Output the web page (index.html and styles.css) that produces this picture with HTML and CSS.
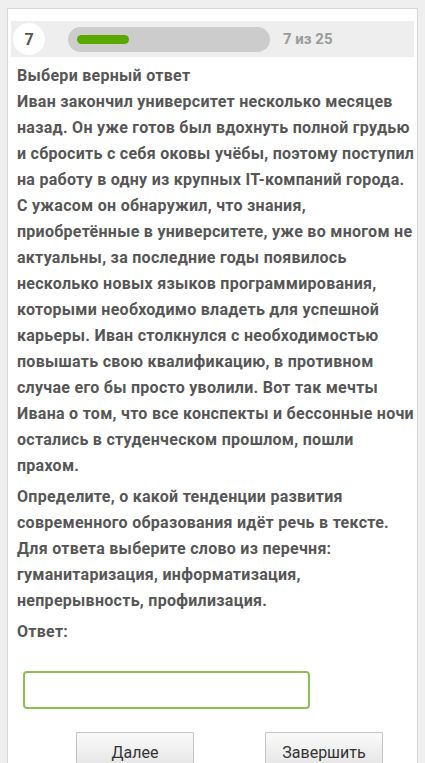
FILE: index.html
```html
<!DOCTYPE html>
<html lang="ru">
<head>
<meta charset="utf-8">
<title>Тест</title>
<link rel="stylesheet" href="styles.css">
</head>
<body>
<div class="card">
  <div class="progress-row">
    <div class="num">7</div>
    <div class="bar"><div class="fill"></div></div>
    <div class="count">7 из 25</div>
  </div>
  <div class="content">
    <p class="para">Выбери верный ответ<br>Иван закончил университет несколько месяцев назад. Он уже готов был вдохнуть полной грудью и сбросить с себя оковы учёбы, поэтому поступил на работу в одну из крупных IT-&#8288;компаний города. С ужасом он обнаружил, что знания, приобретённые в университете, уже во многом не актуальны, за последние годы появилось несколько новых языков программирования, которыми необходимо владеть для успешной карьеры. Иван столкнулся с необходимостью повышать свою квалификацию, в противном случае его бы просто уволили. Вот так мечты Ивана о том, что все конспекты и бессонные ночи остались в студенческом прошлом, пошли прахом.</p>
    <p class="para">Определите, о какой тенденции развития современного образования идёт речь в тексте. Для ответа выберите слово из перечня: гуманитаризация, информатизация, непрерывность, профилизация.</p>
    <p class="para">Ответ:</p>
    <input class="answer" type="text">
    <div class="buttons">
      <button class="btn">Далее</button>
      <button class="btn">Завершить</button>
    </div>
  </div>
</div>
</body>
</html>
```
FILE: styles.css
```css
html, body {
  margin: 0;
  padding: 0;
}
body {
  background: #efefef;
  font-family: Roboto, "Liberation Sans", sans-serif;
  padding: 8px 7px 0 7px;
  height: 763px;
  box-sizing: border-box;
  overflow: hidden;
}
.card {
  background: #fff;
  border: 1px solid #d6d6d6;
  border-bottom: none;
  width: 411px;
  box-sizing: border-box;
  padding: 12px 3px 0 3px;
  height: 800px;
}
.progress-row {
  background: #eeeeee;
  height: 36px;
  display: flex;
  align-items: center;
  padding: 0 2px;
}
.num {
  width: 32px;
  height: 32px;
  border-radius: 50%;
  background: #fff;
  display: flex;
  align-items: center;
  justify-content: center;
  font-weight: 700;
  font-size: 16px;
  color: #555;
}
.bar {
  margin-left: 23px;
  width: 202px;
  height: 25px;
  border-radius: 13px;
  background: #cccccc;
  display: flex;
  align-items: center;
  padding-left: 9px;
  box-sizing: border-box;
}
.fill {
  width: 52px;
  height: 9px;
  border-radius: 5px;
  background: #58a800;
}
.count {
  margin-left: 13px;
  font-size: 15px;
  font-weight: 700;
  color: #9a9a9a;
}
.content {
  padding: 6px 0 0 6px;
  margin-right: -3px;
}
.para {
  margin: 0 0 5px 0;
  font-size: 16px;
  letter-spacing: 0.28px;
  font-weight: 700;
  line-height: 26px;
  color: #565656;
}
.answer {
  display: block;
  margin: 26px 0 0 6px;
  width: 287px;
  height: 38px;
  box-sizing: border-box;
  border: 2px solid #8cc152;
  border-radius: 4px;
  background: #fff;
  outline: none;
}
.buttons {
  display: flex;
  margin-top: 23px;
  padding-left: 59px;
  gap: 71px;
}
.btn {
  width: 118px;
  height: 34px;
  font-family: Roboto, "Liberation Sans", sans-serif;
  font-size: 16px;
  color: #333;
  background: linear-gradient(#fafafa, #e6e6e6);
  border: 1px solid #c4c4c4;
  border-radius: 1px;
  padding: 0;
  padding-top: 6px;
  box-sizing: border-box;
}
```
